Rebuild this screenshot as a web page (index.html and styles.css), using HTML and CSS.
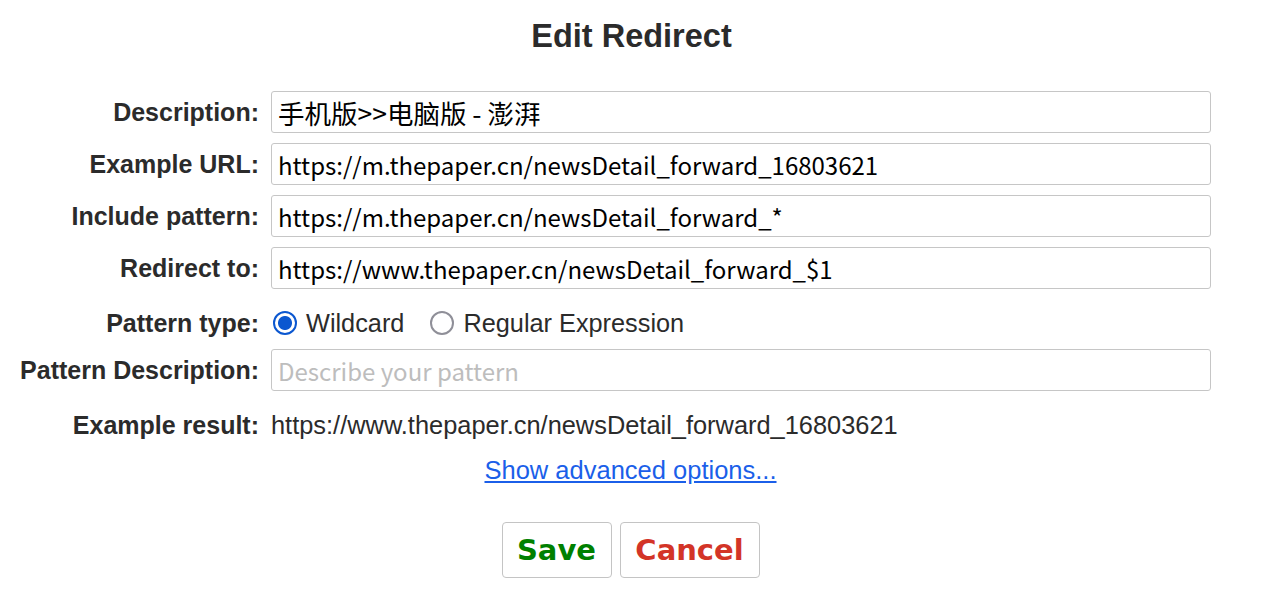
FILE: index.html
```html
<!DOCTYPE html>
<html lang="zh-CN">
<head>
<meta charset="utf-8">
<title>Edit Redirect</title>
<link rel="stylesheet" href="styles.css">
</head>
<body>
<div class="page">
  <h1 class="title">Edit Redirect</h1>
  <div class="form">
    <label class="lbl">Description:</label>
    <input class="field field-cjk" type="text" value="手机版>>电脑版 - 澎湃">

    <label class="lbl">Example URL:</label>
    <input class="field" type="text" value="https://m.thepaper.cn/newsDetail_forward_16803621">

    <label class="lbl">Include pattern:</label>
    <input class="field" type="text" value="https://m.thepaper.cn/newsDetail_forward_*">

    <label class="lbl">Redirect to:</label>
    <input class="field" type="text" value="https://www.thepaper.cn/newsDetail_forward_$1">

    <label class="lbl lbl-radio">Pattern type:</label>
    <div class="radios">
      <label class="radio"><span class="dot checked"></span>Wildcard</label>
      <label class="radio"><span class="dot"></span>Regular Expression</label>
    </div>

    <label class="lbl">Pattern Description:</label>
    <input class="field" type="text" placeholder="Describe your pattern">

    <label class="lbl lbl-result">Example result:</label>
    <div class="result">https://www.thepaper.cn/newsDetail_forward_16803621</div>
  </div>
  <div class="advanced"><a href="#" class="adv-link">Show advanced options...</a></div>
  <div class="buttons">
    <button class="btn btn-save" type="button">Save</button>
    <button class="btn btn-cancel" type="button">Cancel</button>
  </div>
</div>
</body>
</html>
```

FILE: styles.css
```css
html, body {
  margin: 0;
  padding: 0;
  background: #ffffff;
}

body {
  font-family: "Liberation Sans", Arial, sans-serif;
  color: #2b2b2b;
}

.page {
  width: 1261px;
}

.title {
  margin: 0;
  padding-top: 17px;
  height: 74px;
  box-sizing: border-box;
  text-align: center;
  font-size: 32.5px;
  font-weight: bold;
  line-height: 38px;
  color: #2b2b2b;
  padding-left: 2px;
}

.form {
  display: grid;
  grid-template-columns: 241px 940px;
  column-gap: 12px;
  row-gap: 10px;
  padding-left: 18px;
  padding-top: 17px;
  align-items: center;
}

.lbl {
  text-align: right;
  font-size: 25px;
  font-weight: bold;
  white-space: nowrap;
  color: #2b2b2b;
}

.field {
  box-sizing: border-box;
  width: 940px;
  height: 42px;
  margin: 0;
  padding: 0 6px;
  border: 1px solid #c6c6c6;
  border-radius: 3px;
  font-family: "Noto Sans CJK SC", sans-serif;
  font-size: 24px;
  color: #000;
  background: #fff;
  outline: none;
}

.field-cjk {
  font-size: 26.5px;
}

.field::placeholder {
  color: #bdbdbd;
}

.radios {
  display: flex;
  align-items: center;
  height: 40px;
  padding-top: 8px;
  box-sizing: border-box;
}

.lbl-radio {
  padding-top: 8px;
}

.radio {
  display: flex;
  align-items: center;
  font-size: 25.3px;
  color: #2b2b2b;
  margin-right: 24px;
}

.dot {
  width: 24px;
  height: 24px;
  box-sizing: border-box;
  border-radius: 50%;
  border: 2px solid #8f8f98;
  margin: 0 9px 0 2px;
  background: #fff;
}

.dot.checked {
  border: 2px solid #0b57d0;
  background: radial-gradient(circle, #0b57d0 0 6.5px, #fff 7.5px);
}

.lbl-result,
.result {
  padding-top: 6px;
  height: 42px;
  box-sizing: border-box;
  line-height: 36px;
}

.result {
  font-size: 25.4px;
  color: #2b2b2b;
}

.advanced {
  text-align: center;
  padding-top: 12px;
  height: 58px;
  box-sizing: border-box;
}

.adv-link {
  font-size: 25.5px;
  color: #1b5fe9;
  text-decoration: underline;
  line-height: 30px;
}

.buttons {
  display: flex;
  justify-content: center;
  gap: 8px;
  padding-top: 21px;
}

.btn {
  height: 56px;
  box-sizing: border-box;
  background: #fff;
  border: 1px solid #c4c4c4;
  border-radius: 4px;
  font-family: "DejaVu Sans", Verdana, sans-serif;
  font-weight: bold;
  font-size: 29px;
  padding: 0 10px;
  cursor: pointer;
}

.btn-save {
  width: 110px;
  color: #008000;
}

.btn-cancel {
  width: 140px;
  color: #d33427;
}
```
